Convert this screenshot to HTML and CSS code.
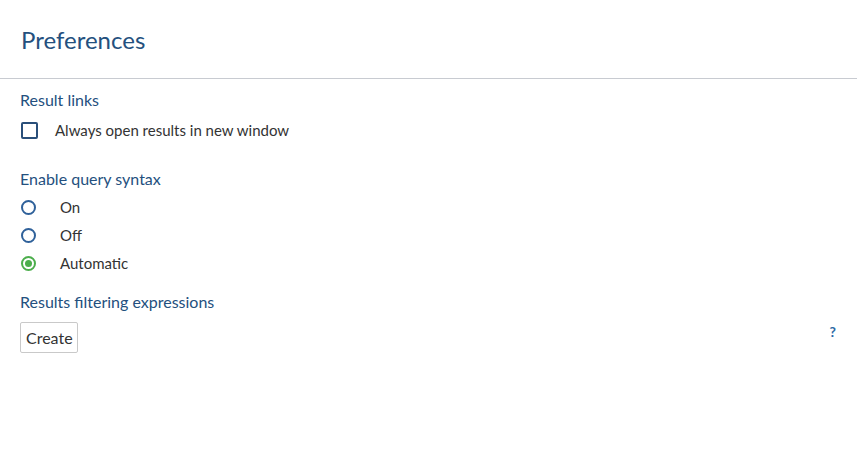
FILE: index.html
```html
<!DOCTYPE html>
<html lang="en">
<head>
  <meta charset="UTF-8">
  <meta name="viewport" content="width=device-width, initial-scale=1.0">
  <title>Preferences</title>
  <link rel="stylesheet" href="styles.css">
</head>
<body>
  <div class="header">
    <h1>Preferences</h1>
  </div>

  <div class="content">
    <div class="section">
      <h2>Result links</h2>
      <label class="option check">
        <span class="box"></span>
        <span>Always open results in new window</span>
      </label>
    </div>

    <div class="section syntax">
      <h2>Enable query syntax</h2>
      <label class="option radio">
        <span class="dot"></span>
        <span>On</span>
      </label>
      <label class="option radio">
        <span class="dot"></span>
        <span>Off</span>
      </label>
      <label class="option radio">
        <span class="dot checked"></span>
        <span>Automatic</span>
      </label>
    </div>

    <div class="section filters">
      <h2>Results filtering expressions</h2>
      <div class="filter-row">
        <button class="btn">Create</button>
        <a class="help" href="#">?</a>
      </div>
    </div>
  </div>
</body>
</html>
```

FILE: styles.css
```css
body {
  margin: 0;
  font-family: Lato, "Open Sans", sans-serif;
  background-color: #fff;
  color: #333;
}
.header {
  height: 79px;
  padding: 0 21px;
  border-bottom: 1px solid #c8cbd1;
  box-sizing: border-box;
}
.header h1 {
  margin: 0;
  padding-top: 25px;
  font-size: 24px;
  line-height: 29px;
  font-weight: 400;
  color: #24507e;
}
.content {
  padding: 11px 20px 0 20px;
}
.section h2 {
  margin: 0;
  font-size: 16px;
  line-height: 20px;
  font-weight: 400;
  color: #24507e;
}
.option {
  display: flex;
  align-items: center;
  height: 28px;
  font-size: 15px;
  color: #333;
  cursor: pointer;
}
.check {
  margin-top: 6px;
}
.box {
  width: 17px;
  height: 17px;
  box-sizing: border-box;
  border: 2px solid #2a4f7a;
  border-radius: 2px;
  margin-left: 1px;
  margin-right: 17px;
}
.syntax {
  margin-top: 25px;
}
.syntax h2 {
  margin-bottom: 4px;
}
.dot {
  width: 15px;
  height: 15px;
  box-sizing: border-box;
  border: 2px solid #2f619a;
  border-radius: 50%;
  margin-left: 1px;
  margin-right: 24px;
  display: flex;
  align-items: center;
  justify-content: center;
}
.dot.checked {
  border-color: #4cae4c;
}
.dot.checked::after {
  content: "";
  width: 7px;
  height: 7px;
  border-radius: 50%;
  background-color: #4cae4c;
}
.filters {
  margin-top: 15px;
}
.filter-row {
  display: flex;
  justify-content: space-between;
  align-items: flex-start;
  margin-top: 10px;
}
.btn {
  height: 31px;
  padding: 0 4px 0 5px;
  font-family: Lato, "Open Sans", sans-serif;
  font-size: 16px;
  color: #333;
  background-color: #fff;
  border: 1px solid #c9c9c9;
  border-radius: 2px;
  cursor: pointer;
}
.help {
  margin-top: 1px;
  margin-right: 1px;
  font-size: 14px;
  font-weight: 700;
  color: #2d6aa6;
  text-decoration: none;
}
```
